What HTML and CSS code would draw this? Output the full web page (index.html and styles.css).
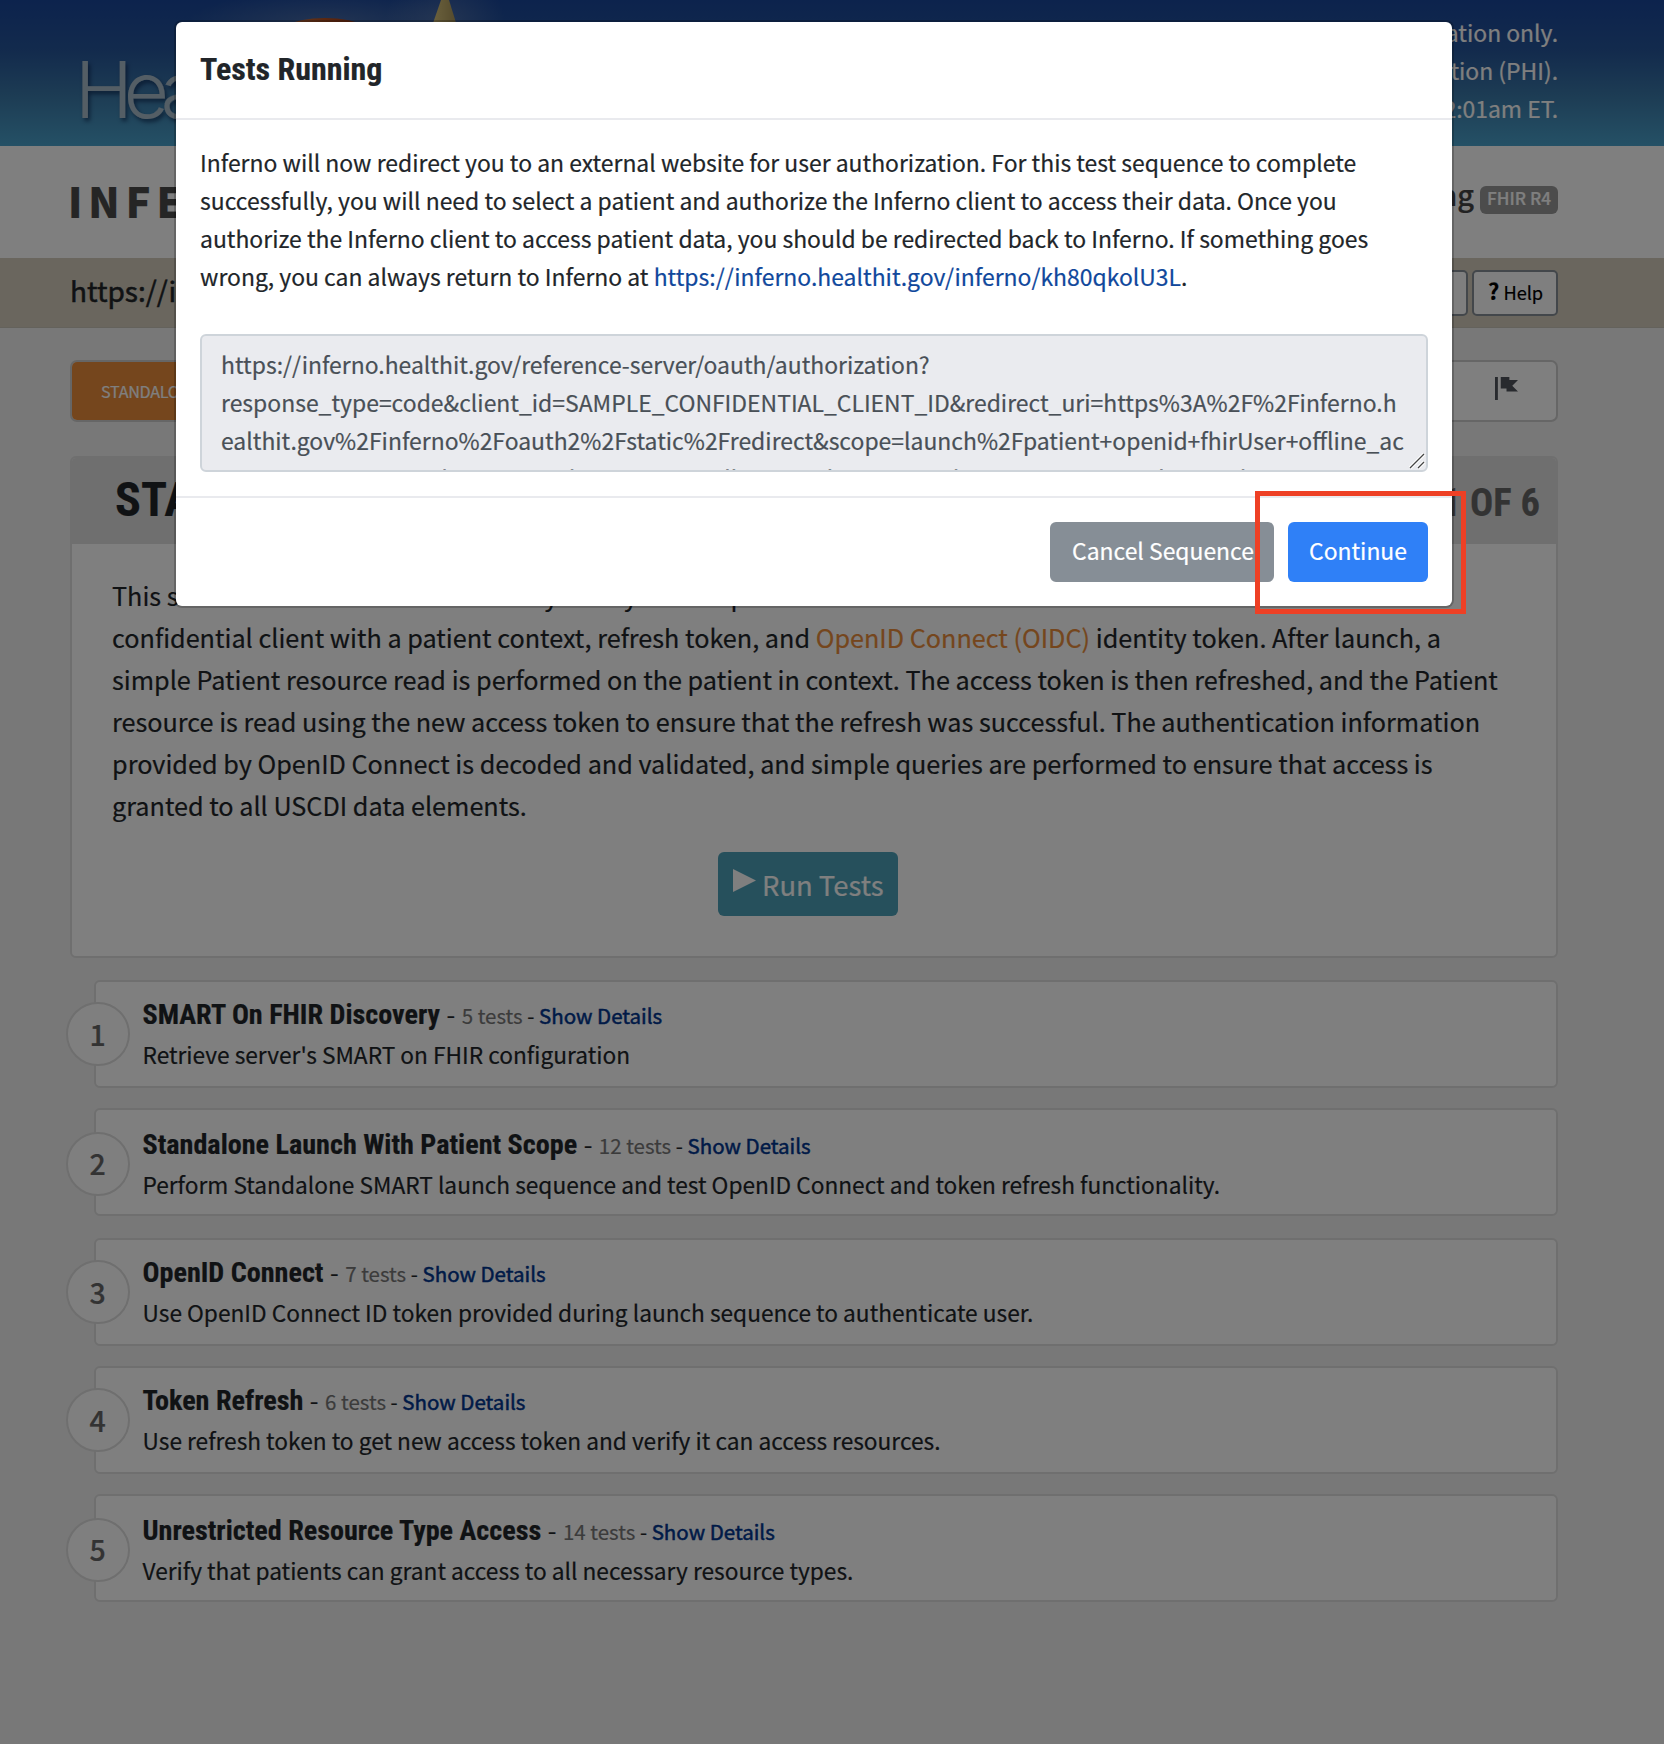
FILE: index.html
```html
<!DOCTYPE html>
<html lang="en">
<head>
<meta charset="utf-8">
<title>Inferno</title>
<link rel="stylesheet" href="styles.css">
</head>
<body>
<header class="banner">
  <svg class="banner-art" width="520" height="146" viewBox="0 0 520 146" aria-hidden="true">
    <defs>
      <linearGradient id="swoosh" x1="0" x2="1"><stop offset="0" stop-color="#d09060"/><stop offset=".5" stop-color="#b85020"/><stop offset="1" stop-color="#902c18"/></linearGradient>
      <linearGradient id="star" x1="0" x2="1"><stop offset="0" stop-color="#d8c47c"/><stop offset="1" stop-color="#a89458"/></linearGradient>
      <radialGradient id="glow"><stop offset="0" stop-color="#7088b0" stop-opacity=".5"/><stop offset="1" stop-color="#7088b0" stop-opacity="0"/></radialGradient>
    </defs>
    <ellipse cx="325" cy="26" rx="140" ry="36" fill="url(#glow)"/>
    <ellipse cx="445" cy="20" rx="60" ry="46" fill="url(#glow)"/>
    <ellipse cx="325" cy="48" rx="62" ry="30" fill="url(#swoosh)"/>
    <path d="M441 0h8l8 26h-25z" fill="url(#star)"/>
  </svg>
  <div class="brand">HealthIT</div>
  <div class="notice">For demonstration only.<br>Do not use with protected health information (PHI).<br>System resets nightly at 12:01am ET.</div>
</header>
<div class="titlebar">
  <div class="product">INFERNO</div>
  <div class="edition">Program Testing <span class="badge">FHIR R4</span></div>
</div>
<div class="urlbar">
  <div class="url">https://inferno.healthit.gov/reference-server/r4</div>
  <div class="tools"><span class="tool">Share</span><span class="tool"><b>?</b> Help</span></div>
</div>
<main class="page">
  <nav class="tabs">
    <div class="tab active">STANDALONE PATIENT APP</div>
    <div class="flag"><svg width="23" height="23" viewBox="0 0 8 8"><path fill="currentColor" d="M0 0v8h1v-8h-1zm2 0v4h2v1h4l-2-1.97 2-2.03h-3v-1h-3z"/></svg></div>
  </nav>
  <section class="panel">
    <div class="panel-head"><h1>STANDALONE PATIENT APP</h1><span>STEP 1 OF 6</span></div>
    <div class="panel-body">
      <p>This scenario demonstrates the ability of a system to perform a Patient Standalone Launch to a <a>SMART on FHIR</a><br>confidential client with a patient context, refresh token, and <a>OpenID Connect (OIDC)</a> identity token. After launch, a<br>simple Patient resource read is performed on the patient in context. The access token is then refreshed, and the Patient<br>resource is read using the new access token to ensure that the refresh was successful. The authentication information<br>provided by OpenID Connect is decoded and validated, and simple queries are performed to ensure that access is<br>granted to all USCDI data elements.</p>
      <div class="run"><svg width="23" height="23" viewBox="0 0 6 6"><path fill="currentColor" d="M0 0v6l6-3z"/></svg><span>Run Tests</span></div>
    </div>
  </section>
  <section class="groups">
    <article class="group"><i class="num">1</i><h2>SMART On FHIR Discovery <span class="dash">-</span> <small><em>5 tests</em> - <a>Show Details</a></small></h2><p>Retrieve server's SMART on FHIR configuration</p></article>
    <article class="group low"><i class="num">2</i><h2>Standalone Launch With Patient Scope <span class="dash">-</span> <small><em>12 tests</em> - <a>Show Details</a></small></h2><p>Perform Standalone SMART launch sequence and test OpenID Connect and token refresh functionality.</p></article>
    <article class="group"><i class="num">3</i><h2>OpenID Connect <span class="dash">-</span> <small><em>7 tests</em> - <a>Show Details</a></small></h2><p>Use OpenID Connect ID token provided during launch sequence to authenticate user.</p></article>
    <article class="group"><i class="num">4</i><h2>Token Refresh <span class="dash">-</span> <small><em>6 tests</em> - <a>Show Details</a></small></h2><p>Use refresh token to get new access token and verify it can access resources.</p></article>
    <article class="group low"><i class="num">5</i><h2>Unrestricted Resource Type Access <span class="dash">-</span> <small><em>14 tests</em> - <a>Show Details</a></small></h2><p>Verify that patients can grant access to all necessary resource types.</p></article>
  </section>
</main>
<div class="backdrop"></div>
<div class="modal">
  <div class="modal-head">Tests Running</div>
  <div class="modal-body">
    <p>Inferno will now redirect you to an external website for user authorization. For this test sequence to complete<br>successfully, you will need to select a patient and authorize the Inferno client to access their data. Once you<br>authorize the Inferno client to access patient data, you should be redirected back to Inferno. If something goes<br>wrong, you can always return to Inferno at <a>https://inferno.healthit.gov/inferno/kh80qkolU3L</a>.</p>
    <div class="field">https://inferno.healthit.gov/reference-server/oauth/authorization?<br>response_type=code&amp;client_id=SAMPLE_CONFIDENTIAL_CLIENT_ID&amp;redirect_uri=https%3A%2F%2Finferno.h<br>ealthit.gov%2Finferno%2Foauth2%2Fstatic%2Fredirect&amp;scope=launch%2Fpatient+openid+fhirUser+offline_ac<br>cess+patient%2FMedication.read+patient%2FAllergyIntolerance.read+patient%2FCarePlan.read+patient
      <svg class="grip" width="16" height="16" viewBox="0 0 16 16"><path d="M1 15L15 1M9 15l6-6" stroke="#fff" stroke-width="3.4"/><path d="M1 15L15 1M9 15l6-6" stroke="#444" stroke-width="1.3"/></svg>
    </div>
  </div>
  <div class="modal-foot"><span class="btn grey">Cancel Sequence</span><span class="btn blue">Continue</span></div>
</div>
<div class="callout"></div>
</body>
</html>
```

FILE: styles.css
```css
* { box-sizing: border-box; }
body { margin: 0; width: 1664px; height: 1744px; overflow: hidden; position: relative; background: #f0f0f0; color: #212529; font: 22.7px/38px "Noto Sans CJK JP", sans-serif; -webkit-text-stroke: .2px; }
h1, h2, p { margin: 0; font-weight: 400; white-space: nowrap; }
i, em { font-style: normal; }
svg { display: block; flex: none; }

.banner { position: relative; height: 146px; padding: 13px 106px 0 76px; display: flex; justify-content: space-between; background: linear-gradient(#19469a, #26569a 35%, #3a78a8 65%, #4aa2cc); color: #fff; overflow: hidden; }
.banner-art { position: absolute; left: 0; top: 0; }
.brand { position: relative; font: 300 78px/96px Inter, sans-serif; letter-spacing: -9px; margin: 29px 0 0 -1px; color: #a8bccb; text-shadow: 2px 3px 4px rgba(0,20,60,.6); }
.notice { text-align: right; font-size: 22.9px; white-space: nowrap; }

.titlebar { height: 112px; padding: 0 106px 0 68px; display: flex; align-items: center; justify-content: space-between; background: #fff; }
.product { font-size: 41px; font-weight: 900; letter-spacing: 6px; color: #4a4a4a; padding-bottom: 4px; }
.edition { display: flex; align-items: center; gap: 6px; font-size: 29px; font-weight: 500; color: #444; padding-bottom: 18px; }
.badge { height: 28px; width: 78px; margin-top: 14px; border-radius: 6px; background: #999; color: #fff; font-size: 17.2px; line-height: 23px; text-align: center; }

.urlbar { height: 70px; padding: 0 106px 0 70px; display: flex; align-items: center; justify-content: space-between; background: #d4ccbc; border-bottom: 1px solid #c8c4b8; }
.url { font-size: 28px; padding-bottom: 6px; -webkit-text-stroke: .5px; }
.tools { display: flex; gap: 4px; }
.tool { height: 46px; width: 86px; padding-left: 14px; border: 2px solid #868e96; border-radius: 5px; background: #fff; color: #000; font-size: 18.2px; line-height: 36px; }
.tool b { font-size: 22px; }

.page { padding: 32px 106px 0 70px; }
.tabs { height: 62px; display: flex; justify-content: space-between; border: 2px solid #ccc; border-radius: 7px; background: #fff; overflow: hidden; }
.tab { width: 260px; padding-left: 29px; background: #ea8c3a; color: #fff; font-size: 16.2px; letter-spacing: -.3px; line-height: 58px; white-space: nowrap; }
.flag { padding: 15px 38px 0 0; color: #50555c; }

.panel { margin-top: 34px; height: 502px; border: 2px solid #dedede; border-radius: 6px; background: #fff; overflow: hidden; }
.panel-head { height: 86px; padding: 0 16px 0 43px; display: flex; justify-content: space-between; background: #dedede; font-family: "Roboto Condensed", sans-serif; font-weight: 700; line-height: 84px; }
.panel-head h1 { font-size: 48px; font-weight: 700; }
.panel-head span { font-size: 38.6px; line-height: 90px; color: #666; }
.panel-body { padding: 30px 40px 0; display: flex; flex-direction: column; align-items: center; }
.panel-body p { width: 100%; font-size: 25.21px; line-height: 42px; }
.panel-body a { color: #ea8c3a; }
.run { margin-top: 26px; margin-right: 12px; height: 64px; width: 180px; padding-left: 15px; display: flex; gap: 6px; border-radius: 6px; background: #4ca1b8; color: #fff; font-size: 27.4px; line-height: 64px; white-space: nowrap; }
.run svg { margin-top: 17px; }

.groups { margin: 22px 0 0 24px; display: grid; gap: 20px; }
.group { position: relative; height: 108px; padding: 12px 0 0 46.5px; border: 2px solid #dedede; border-radius: 6px; background: #fff; }
.group.low { padding-top: 14px; }
.group.low + .group { margin-top: 2px; }
.group h2 { font: 700 28.15px/38px "Roboto Condensed", sans-serif; }
.group small, .dash { font: 400 20.5px/38px "Noto Sans CJK JP", sans-serif; }
.dash { font-size: 25px; }
.group em { color: #777; }
.group a { color: #00358f; -webkit-text-stroke: .5px; }
.group p { line-height: 38px; margin-top: 2px; }
.num { position: absolute; left: -30px; top: 20px; width: 64px; height: 64px; border: 2px solid #dedede; border-radius: 50%; background: #fff; color: #666; font-size: 28.5px; font-weight: 500; line-height: 59px; text-align: center; padding-right: 1px; }
.low .num { top: 22px; line-height: 58px; }

.backdrop { position: absolute; inset: 0; background: rgba(0,0,0,.5); }
.modal { position: absolute; left: 176px; top: 22px; width: 1276px; height: 584px; border-radius: 6px; background: #fff; box-shadow: 0 0 0 2px rgba(0,0,0,.2); }
.modal-head { height: 98px; padding: 23px 24px 0; border-bottom: 2px solid #e9eaee; font: 700 32px/48px "Roboto Condensed", sans-serif; }
.modal-body { height: 378px; padding: 23px 24px 0; border-bottom: 2px solid #e9eaee; font-size: 22.93px; }
.modal-body a { color: #10489c; }
.field { position: relative; margin-top: 39px; height: 138px; padding: 9px 0 0 19px; border: 2px solid #ced4da; border-radius: 6px; background: #eaebef; color: #495057; overflow: hidden; white-space: nowrap; }
.grip { position: absolute; right: 1px; bottom: 1px; }
.modal-foot { height: 108px; padding: 0 24px; display: flex; align-items: center; justify-content: flex-end; gap: 14px; font-size: 22.9px; }
.btn { height: 60px; line-height: 57px; border-radius: 6px; color: #fff; text-align: center; white-space: nowrap; }
.grey { width: 224px; padding-left: 2px; background: #868e96; }
.blue { width: 140px; background: #2f80f7; }
.callout { position: absolute; left: 1255px; top: 491px; width: 211px; height: 123px; border: 5px solid #ee4025; }
```
